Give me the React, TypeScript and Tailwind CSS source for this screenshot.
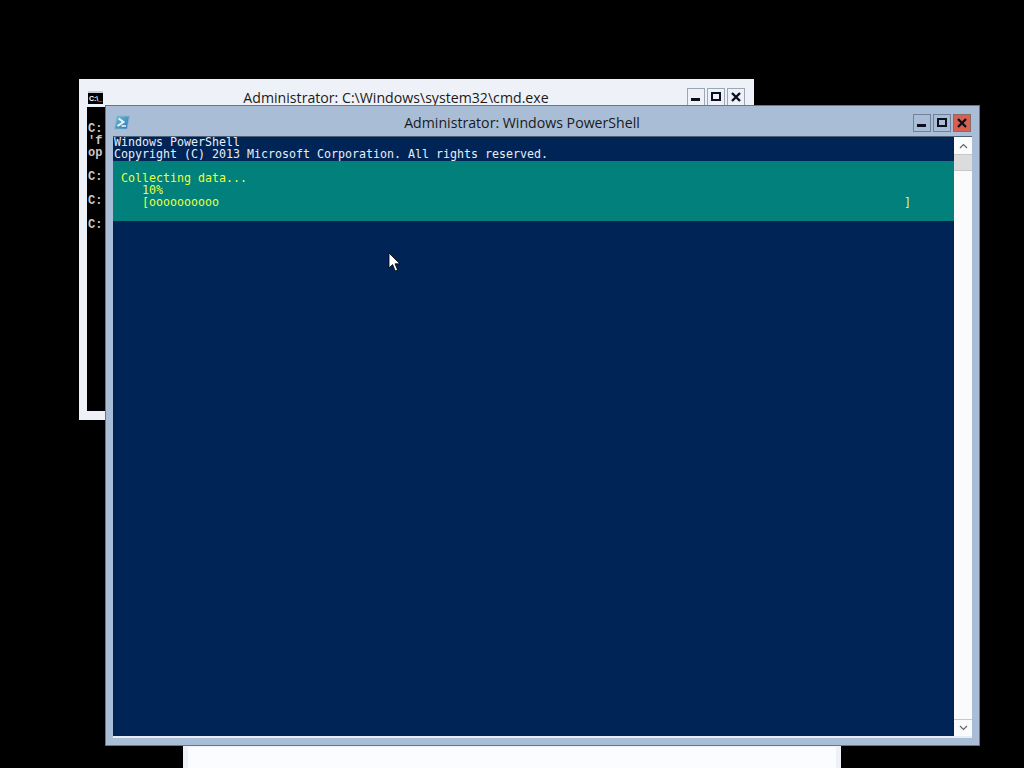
const mono = "font-['DejaVu_Sans_Mono','Liberation_Mono',monospace] text-[11.63px] leading-[12px] whitespace-pre";

function Min() {
  return (
    <svg width="16" height="16" viewBox="0 0 16 16" className="block">
      <rect x="3" y="9" width="9" height="3" fill="#0a1020" />
    </svg>
  );
}
function Max() {
  return (
    <svg width="16" height="16" viewBox="0 0 16 16" className="block">
      <rect x="4" y="4" width="8" height="7" fill="none" stroke="#0a1020" strokeWidth="2" />
    </svg>
  );
}
function Close() {
  return (
    <svg width="16" height="16" viewBox="0 0 16 16" className="block">
      <path d="M4 4l8 8M12 4l-8 8" stroke="#0a1020" strokeWidth="2.4" fill="none" />
    </svg>
  );
}

function Btn({ children, cls }: { children: React.ReactNode; cls: string }) {
  return <div className={`w-[18px] h-[18px] border flex items-center justify-center ${cls}`}>{children}</div>;
}

function PsIcon() {
  return (
    <svg width="16" height="15" viewBox="0 0 16 15" className="block">
      <defs>
        <linearGradient id="ps" x1="0" y1="0" x2="1" y2="1">
          <stop offset="0" stopColor="#6fc0d8" />
          <stop offset="1" stopColor="#2a74ad" />
        </linearGradient>
      </defs>
      <path d="M3 1h12.5l-2.5 13H.5z" fill="url(#ps)" stroke="#8fb6cf" strokeWidth="0.8" />
      <path d="M4.5 3.5l5 3.5-6 4" fill="none" stroke="#eaf6f8" strokeWidth="2" />
      <path d="M7.5 11h4.5" stroke="#eaf6f8" strokeWidth="1.6" />
    </svg>
  );
}

function CmdIcon() {
  return (
    <div className="w-[15px] h-[13px] bg-black border-t-2 border-[#c9ccd2] flex items-center justify-center overflow-hidden">
      <span className="font-['Liberation_Sans',sans-serif] text-[7px] leading-[9px] text-white font-bold whitespace-pre">C:\_</span>
    </div>
  );
}

function CmdWindow() {
  return (
    <div className="absolute left-[79px] top-[79px] w-[675px] h-[341px] bg-[#eef1f8] flex flex-col px-2 pb-[9px] overflow-hidden">
      <div className="h-[28px] shrink-0 relative flex items-center justify-center pr-[41px]">
        <div className="absolute left-[1px] top-[12px]"><CmdIcon /></div>
        <span className="font-['Open_Sans',sans-serif] text-[14.15px] leading-none text-[#1a1a1a] mt-[10px] whitespace-nowrap">Administrator: C:\Windows\system32\cmd.exe</span>
        <div className="absolute right-[1px] top-[9px] flex gap-[2px]">
          <Btn cls="border-[#9aa7b5]"><Min /></Btn>
          <Btn cls="border-[#9aa7b5]"><Max /></Btn>
          <Btn cls="border-[#9aa7b5]"><Close /></Btn>
        </div>
      </div>
      <div className="flex-1 bg-black pt-[16px] pl-[1px] font-['Liberation_Mono',monospace] text-[12px] leading-[12px] text-[#c8c8c8] font-bold">
        <div>C:</div>
        <div>&#39;f</div>
        <div>op</div>
        <div className="mt-[12px]">C:</div>
        <div className="mt-[12px]">C:</div>
        <div className="mt-[12px]">C:</div>
      </div>
    </div>
  );
}

function PsWindow() {
  return (
    <div className="absolute left-[105px] top-[105px] w-[875px] h-[641px] bg-[#a9bdd6] border border-[#66778a] flex flex-col">
      <div className="h-[30px] shrink-0 relative flex items-center justify-center pr-[41px]">
        <div className="absolute left-[8px] top-[9px]"><PsIcon /></div>
        <span className="font-['Open_Sans',sans-serif] text-[14.15px] leading-none text-[#1a1a1a] mt-[5px] whitespace-nowrap">Administrator: Windows PowerShell</span>
        <div className="absolute right-[8px] top-[8px] flex gap-[2px]">
          <Btn cls="border-[#6f8299]"><Min /></Btn>
          <Btn cls="border-[#6f8299]"><Max /></Btn>
          <Btn cls="border-[#8a6a66] bg-[#d9604e]"><Close /></Btn>
        </div>
      </div>
      <div className="flex-1 flex ml-[7px] mr-[7px] mb-[7px] border-b-2 border-t border-t-[#4f5f73] border-b-[#e6edf6] min-h-0">
        <div className="flex-1 bg-[#012456] flex flex-col">
          <div className={`${mono} pl-px h-[24px] text-[#e8eef5]`}>
            <div className="-mt-px">Windows PowerShell</div>
            <div>Copyright (C) 2013 Microsoft Corporation. All rights reserved.</div>
          </div>
          <div className={`${mono} bg-[#01807c] h-[60px] pt-[11px] pl-[8px] text-[#eaff3c]`}>
            <div>Collecting data...</div>
            <div>   10%</div>
            <div className="flex w-[790px] justify-between">
              <span>   [oooooooooo</span>
              <span>]</span>
            </div>
          </div>
        </div>
        <div className="w-[18px] bg-[#fafbfd] flex flex-col">
          <div className="h-[17px] flex items-center justify-center">
            <svg width="9" height="6" viewBox="0 0 9 6"><path d="M1 5l3.5-3.5L8 5" fill="none" stroke="#666" strokeWidth="1.2" /></svg>
          </div>
          <div className="h-[17px] bg-[#dcdcdc] border-y border-[#c8c8c8]" />
          <div className="flex-1" />
          <div className="h-[17px] border-t border-[#c8c8c8] flex items-center justify-center">
            <svg width="9" height="6" viewBox="0 0 9 6"><path d="M1 1l3.5 3.5L8 1" fill="none" stroke="#666" strokeWidth="1.2" /></svg>
          </div>
        </div>
      </div>
    </div>
  );
}

export default function App() {
  return (
    <div className="relative w-[1024px] h-[768px] bg-black overflow-hidden">
      <div className="absolute left-[183px] top-[740px] w-[658px] h-[28px] bg-[#eef1f8] pl-[5px] pr-[5px] pt-[7px]">
        <div className="h-full bg-[#fbfcff]" />
      </div>
      <CmdWindow />
      <PsWindow />
      <svg className="absolute left-[388px] top-[252px]" width="13" height="22" viewBox="0 0 13 22">
        <path d="M1 1v15l3.6-3.4 2.6 6.4 2.4-1-2.6-6.2h4.8z" fill="#fff" stroke="#000" strokeWidth="0.8" />
      </svg>
    </div>
  );
}
